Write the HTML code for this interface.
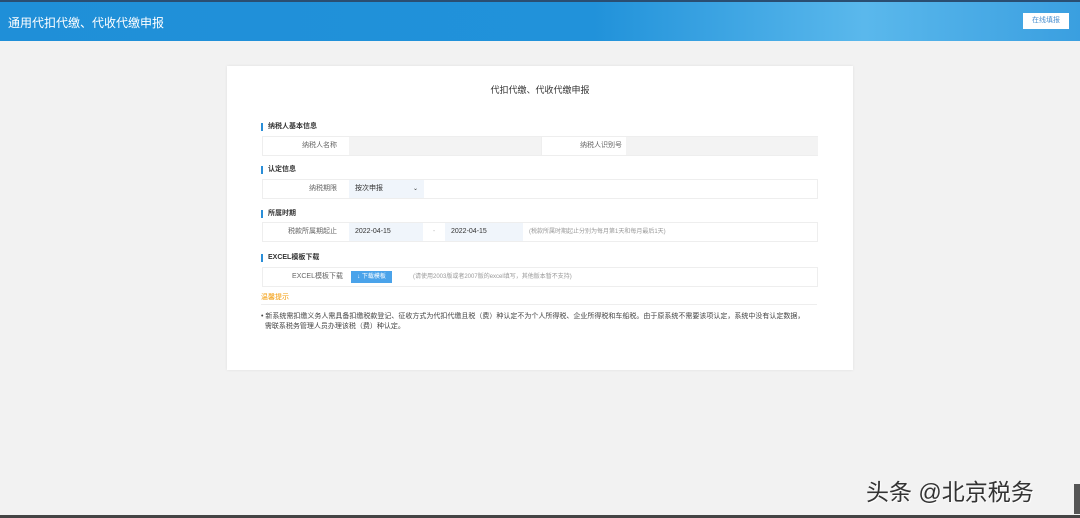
<!DOCTYPE html>
<html><head><meta charset="utf-8"><style>
*{margin:0;padding:0;box-sizing:border-box}
body{width:1080px;height:518px;background:#f2f2f2;font-family:"Liberation Sans","Noto Sans CJK SC",sans-serif;position:relative;overflow:hidden;color:#333}
.hdr{position:absolute;left:0;top:0;width:1080px;height:41px;background:linear-gradient(90deg,#1f8fd8 0%,#2192da 55%,#5ab8ec 80%,#3a9fe0 100%);border-top:2px solid #2a4e72}
.hdr .t{position:absolute;left:8px;top:12px;color:#fff;font-size:12px}
.hdr .b{position:absolute;left:1023px;top:11px;width:46px;height:16px;background:#fff;color:#4a90d0;font-size:7px;text-align:center;line-height:16px}
.card{position:absolute;left:227px;top:66px;width:626px;height:304px;background:#fff;box-shadow:0 0 3px rgba(0,0,0,.08)}
.a{position:absolute;font-size:8px}
.title{left:0;width:626px;text-align:center;top:17px;font-size:9px;color:#333}
.sec{font-size:7px;font-weight:bold;color:#333;padding-left:5px;border-left:2px solid #2a8ed8;line-height:8px}
.row{position:absolute;left:35px;width:556px;height:20px;border:1px solid #eee;background:#fff}
.lab{position:absolute;top:0;height:18px;line-height:18px;text-align:right;font-size:7px;color:#666;background:#fff}
.cell{position:absolute;top:0;height:18px;line-height:18px;font-size:7px;background:#f0f5fb;padding-left:6px;color:#333}
</style></head><body>
<div class="hdr"><div class="t">通用代扣代缴、代收代缴申报</div><div class="b">在线填报</div></div>
<div class="card">
<div class="a title">代扣代缴、代收代缴申报</div>
<div class="a sec" style="left:34px;top:57px">纳税人基本信息</div>
<div class="row" style="top:70px">
<div class="lab" style="left:0;width:78px;padding-right:4px">纳税人名称</div>
<div class="cell" style="left:86px;width:192px;background:#f3f3f3"></div>
<div class="lab" style="left:278px;width:85px;padding-right:4px;border-left:1px solid #eee">纳税人识别号</div>
<div class="cell" style="left:363px;width:192px;background:#f3f3f3"></div>
</div>
<div class="a sec" style="left:34px;top:100px">认定信息</div>
<div class="row" style="top:113px">
<div class="lab" style="left:0;width:78px;padding-right:4px">纳税期限</div>
<div class="cell" style="left:86px;width:75px">按次申报<span style="position:absolute;left:64px;font-size:6px">⌄</span></div>
</div>
<div class="a sec" style="left:34px;top:144px">所属时期</div>
<div class="row" style="top:156px">
<div class="lab" style="left:0;width:78px;padding-right:4px">税款所属期起止</div>
<div class="cell" style="left:86px;width:74px">2022-04-15</div>
<div class="lab" style="left:160px;width:22px;text-align:center;color:#bbb">-</div>
<div class="cell" style="left:182px;width:78px">2022-04-15</div>
<div class="lab" style="left:266px;width:200px;text-align:left;font-size:6px;color:#999">(税款所属时期起止分别为每月第1天和每月最后1天)</div>
</div>
<div class="a sec" style="left:34px;top:188px">EXCEL模板下载</div>
<div class="row" style="top:201px">
<div class="lab" style="left:0;width:84px;padding-right:4px">EXCEL模板下载</div>
<div style="position:absolute;left:88px;top:3px;width:41px;height:12px;background:#4aa3ea;color:#fff;font-size:6px;line-height:12px;text-align:center">↓ 下载模板</div>
<div class="lab" style="left:150px;width:260px;text-align:left;font-size:6px;color:#999">(请使用2003版或者2007版的excel填写，其他版本暂不支持)</div>
</div>
<div class="a" style="left:34px;top:226px;font-size:7px;color:#f39800">温馨提示</div>
<div style="position:absolute;left:34px;top:238px;width:556px;border-top:1px solid #eee"></div>
<div class="a" style="left:34px;top:246px;width:560px;font-size:7px;line-height:10px;color:#444">• 新系统需扣缴义务人需具备扣缴税款登记、征收方式为代扣代缴且税（费）种认定不为个人所得税、企业所得税和车船税。由于原系统不需要该项认定，系统中没有认定数据，<br>&nbsp;&nbsp;需联系税务管理人员办理该税（费）种认定。</div>
</div>
<div style="position:absolute;left:866px;top:473px;font-size:23px;color:#333;text-shadow:1px 1px 1px #fff">头条 @北京税务</div>
<div style="position:absolute;left:1074px;top:484px;width:6px;height:30px;background:#555"></div>
<div style="position:absolute;left:0;top:515px;width:1080px;height:3px;background:#444"></div>
</body></html>
